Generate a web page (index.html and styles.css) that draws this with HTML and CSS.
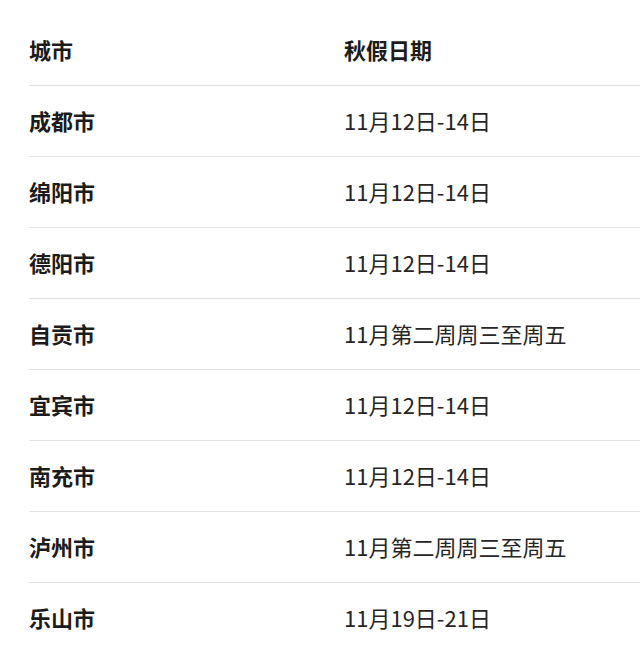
FILE: index.html
```html
<!DOCTYPE html>
<html lang="zh-CN">
<head>
<meta charset="utf-8">
<link rel="stylesheet" href="styles.css">
</head>
<body>
<div class="table">
  <div class="row head"><div class="city">城市</div><div class="date">秋假日期</div></div>
  <div class="row"><div class="city">成都市</div><div class="date">11月12日-14日</div></div>
  <div class="row"><div class="city">绵阳市</div><div class="date">11月12日-14日</div></div>
  <div class="row"><div class="city">德阳市</div><div class="date">11月12日-14日</div></div>
  <div class="row"><div class="city">自贡市</div><div class="date">11月第二周周三至周五</div></div>
  <div class="row"><div class="city">宜宾市</div><div class="date">11月12日-14日</div></div>
  <div class="row"><div class="city">南充市</div><div class="date">11月12日-14日</div></div>
  <div class="row"><div class="city">泸州市</div><div class="date">11月第二周周三至周五</div></div>
  <div class="row last"><div class="city">乐山市</div><div class="date">11月19日-21日</div></div>
</div>
</body>
</html>
```
FILE: styles.css
```css
html, body {
  margin: 0;
  padding: 0;
  background: #ffffff;
}
body {
  font-family: "Noto Sans CJK SC", "Noto Sans", sans-serif;
  color: #1a1a1a;
  width: 640px;
  height: 652px;
  overflow: hidden;
}
.table {
  padding-top: 15px;
  margin-left: 29px;
}
.row {
  display: grid;
  grid-template-columns: 315px 1fr;
  align-items: center;
  box-sizing: border-box;
  height: 71px;
  padding-bottom: 3px;
  border-bottom: 1px solid #e2e2e2;
  font-size: 22px;
  line-height: 1;
}
.row.last {
  border-bottom: none;
}
.city {
  font-weight: 600;
  color: #1c1c1c;
}
.date {
  font-weight: 400;
  color: #262626;
}
.head .date {
  font-weight: 600;
  color: #1c1c1c;
}
```
